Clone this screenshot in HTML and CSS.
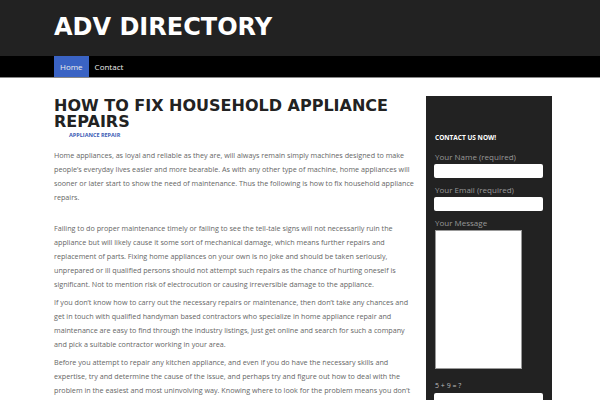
FILE: index.html
```html
<!DOCTYPE html>
<html>
<head>
<meta charset="utf-8">
<link rel="stylesheet" href="styles.css">
</head>
<body>
<header class="site-header">
  <div class="wrap"><h1 class="site-title">ADV DIRECTORY</h1></div>
</header>
<nav class="site-nav">
  <div class="wrap nav-items">
    <a class="nav-link active">Home</a>
    <a class="nav-link">Contact</a>
  </div>
</nav>
<div class="wrap page">
  <main class="content">
    <h2 class="entry-title">HOW TO FIX HOUSEHOLD APPLIANCE REPAIRS</h2>
    <div class="entry-cat">APPLIANCE REPAIR</div>
    <p class="p-first">Home appliances, as loyal and reliable as they are, will always remain simply machines designed to make people’s everyday lives easier and more bearable. As with any other type of machine, home appliances will sooner or later start to show the need of maintenance. Thus the following is how to fix household appliance repairs.</p>
    <p>Failing to do proper maintenance timely or failing to see the tell-tale signs will not necessarily ruin the appliance but will likely cause it some sort of mechanical damage, which means further repairs and replacement of parts. Fixing home appliances on your own is no joke and should be taken seriously, unprepared or ill qualified persons should not attempt such repairs as the chance of hurting oneself is significant. Not to mention risk of electrocution or causing irreversible damage to the appliance.</p>
    <p>If you don’t know how to carry out the necessary repairs or maintenance, then don’t take any chances and get in touch with qualified handyman based contractors who specialize in home appliance repair and maintenance are easy to find through the industry listings, just get online and search for such a company and pick a suitable contractor working in your area.</p>
    <p>Before you attempt to repair any kitchen appliance, and even if you do have the necessary skills and expertise, try and determine the cause of the issue, and perhaps try and figure out how to deal with the problem in the easiest and most uninvolving way. Knowing where to look for the problem means you don’t have to take everything apart.</p>
  </main>
  <aside class="sidebar">
    <h3 class="widget-title">CONTACT US NOW!</h3>
    <label class="field-label">Your Name (required)</label>
    <div class="input"></div>
    <label class="field-label">Your Email (required)</label>
    <div class="input"></div>
    <label class="field-label">Your Message</label>
    <div class="textarea"></div>
    <label class="field-label captcha">5 + 9 = ?</label>
    <div class="input"></div>
  </aside>
</div>
</body>
</html>
```
FILE: styles.css
```css
html, body { margin: 0; padding: 0; background: #fff; }
body { font-family: "Open Sans", "Liberation Sans", sans-serif; overflow: hidden; }
.wrap { margin-left: 54px; width: 498px; }
.site-header { background: #222; height: 56px; }
.site-title {
  margin: 0; padding-top: 13px;
  font-family: "DejaVu Sans", sans-serif; font-weight: bold;
  font-size: 24px; line-height: 28px; color: #fff;
}
.site-nav { background: #000; height: 21px; border-bottom: 1px solid #888; }
.nav-items { display: flex; height: 21px; }
.nav-link {
  display: flex; align-items: center; padding: 0 6px;
  font-size: 8px; color: #eee;
}
.nav-link.active { background: #3a63c4; padding: 0 6px; }
.page { display: flex; gap: 10px; margin-top: 18px; }
.content { width: 362px; color: #666; font-size: 7.2px; line-height: 14px; }
.entry-title {
  margin: 2px 0 0; font-family: "DejaVu Sans", sans-serif; font-weight: bold;
  font-size: 16px; line-height: 16px; color: #222;
}
.entry-cat {
  margin: 1px 0 0 15px; font-size: 5.5px; font-weight: bold;
  color: #3a5cb5; line-height: 8px;
}
.content p { margin: 0 0 4px; }
.content p.p-first { margin-top: 9px; margin-bottom: 17px; }
.sidebar {
  width: 126px; flex-shrink: 0; background: #222; padding: 37px 9px 20px 8px; box-sizing: border-box;
  display: flex; flex-direction: column;
}
.sidebar > * { flex-shrink: 0; }
.widget-title {
  margin: 0 0 7px 1px; font-size: 6.5px; font-weight: bold; color: #fff; line-height: 10px;
}
.field-label { font-size: 8px; color: #999; line-height: 13px; margin-bottom: 1px; margin-left: 1px; }
.input { height: 14px; background: #fff; border-radius: 2px; margin-bottom: 5px; }
.textarea { width: 87px; height: 139px; background: #fff; border: 1px solid #999; box-sizing: border-box; margin-left: 1px; margin-bottom: 10px; }
.captcha { font-size: 7px; color: #bbb; }
```
